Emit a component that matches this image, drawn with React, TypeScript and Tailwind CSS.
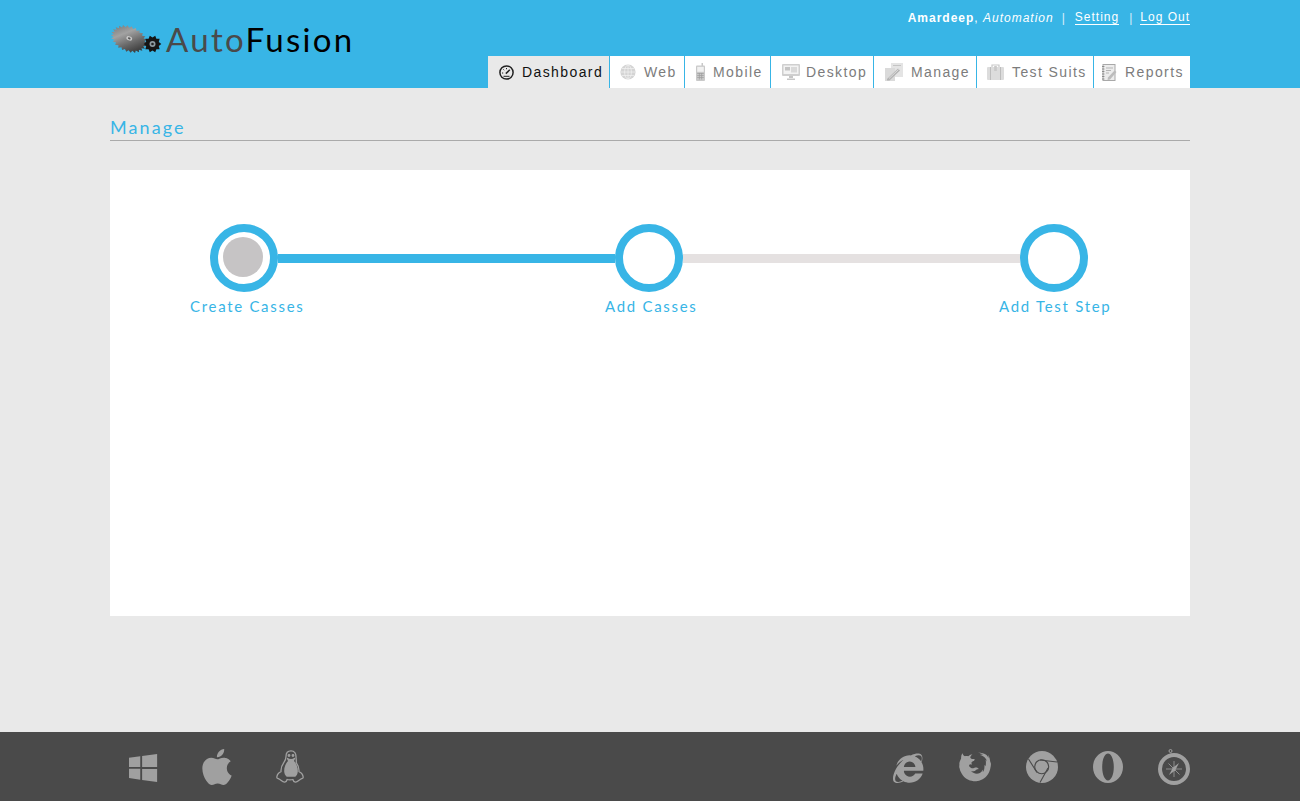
import React from 'react';
import { ImWindows8, ImAppleinc, ImIe, ImFirefox } from 'react-icons/im';

// Saw blade / small gear outlines for the logo
const gearPath = (cx: number, cy: number, r: number, depth: number, teeth: number) => {
    const pts: string[] = [];
    for (let i = 0; i < teeth * 2; i++) {
        const a = (Math.PI * i) / teeth;
        const rad = i % 2 === 0 ? r : r - depth;
        pts.push(`${(cx + Math.cos(a) * rad).toFixed(2)},${(cy + Math.sin(a) * rad).toFixed(2)}`);
    }
    return `M${pts.join('L')}Z`;
};

const LogoGears = () => (
    <svg width="52" height="32" viewBox="0 0 52 32" className="shrink-0">
        <defs>
            <linearGradient id="blade" x1="0" y1="0.1" x2="1" y2="0.8">
                <stop offset="0" stopColor="#6f6f6f" />
                <stop offset="0.35" stopColor="#a2a2a2" />
                <stop offset="0.65" stopColor="#666" />
                <stop offset="1" stopColor="#2b2b2b" />
            </linearGradient>
        </defs>
        <g transform="translate(18 15) rotate(22) scale(1 0.68) translate(-18 -15)">
            <path d={gearPath(18, 15, 19, 3, 26)} fill="url(#blade)" />
            <circle cx="18" cy="14" r="3" fill="#c9c9c9" />
            <circle cx="18" cy="14" r="1.4" fill="#555" />
        </g>
        <path d={gearPath(41.5, 20, 8.8, 2.2, 10)} fill="#151515" />
        <circle cx="41.5" cy="20" r="3" fill="#8d9aa0" />
        <circle cx="41.5" cy="20" r="1.300" fill="#222" />
    </svg>
);

const GaugeIcon = () => (
    <svg width="15" height="15" viewBox="0 0 15 15" fill="none">
        <circle cx="7.5" cy="7.5" r="6.6" stroke="#222" strokeWidth="1.5" />
        <path d="M6.800 8.600 10.800 4.800" stroke="#222" strokeWidth="1.5" />
        <path d="M3 8h1.200M4.400 4.400l.8.8M7.500 3v1.200M4.500 11.300h6" stroke="#222" strokeWidth="1" />
    </svg>
);

const GlobeIcon = () => (
    <svg width="16" height="16" viewBox="0 0 16 16" fill="none">
        <circle cx="8" cy="8" r="7.6" fill="#d4d4d4" />
        <g stroke="#f2f2f2" strokeWidth="0.7">
            <ellipse cx="8" cy="8" rx="3.4" ry="7" />
            <path d="M8 1v14M1 8h14M2 4.500h12M2 11.500h12" />
        </g>
    </svg>
);

const PhoneIcon = () => (
    <svg width="9" height="18" viewBox="0 0 9 18" fill="none">
        <rect x="5.600" y="0" width="1.200" height="3" fill="#bbb" />
        <rect x="0" y="2.500" width="9" height="15.500" rx="1" fill="#c9c9c9" />
        <rect x="1.200" y="3.800" width="6.600" height="5" fill="#f1f1f1" />
        <path d="M1.200 10.500h6.600M1.200 12.500h6.600M1.200 14.500h6.600M3.400 10v6.500M5.600 10v6.500" stroke="#9e9e9e" strokeWidth="0.7" />
    </svg>
);

const DesktopIcon = () => (
    <svg width="18" height="16" viewBox="0 0 18 16" fill="none">
        <rect x="0" y="0" width="18" height="12" rx="1" fill="#cfcfcf" />
        <rect x="1.500" y="1.500" width="15" height="8.500" fill="#f3f3f3" />
        <rect x="3" y="3" width="5" height="3.500" fill="#c4c4c4" />
        <rect x="9" y="3" width="6" height="5.500" fill="#d9d9d9" />
        <path d="M7 12h4v2H7zM5 14.500h8V16H5z" fill="#c6c6c6" />
    </svg>
);

const ManageIcon = () => (
    <svg width="18" height="18" viewBox="0 0 18 18" fill="none">
        <rect x="6" y="0" width="12" height="14" fill="#e4e4e4" />
        <path d="M8 2.500h8" stroke="#c4c4c4" />
        <rect x="0" y="5" width="10" height="13" fill="#dadada" />
        <path d="M2 16 13 5.500l2 2L4.500 17.500H2z" fill="#b4b4b4" />
        <path d="M4 15.500 13.500 6.500" stroke="#eeeeee" strokeWidth="0.7" />
    </svg>
);

const BriefcaseIcon = () => (
    <svg width="17" height="16" viewBox="0 0 17 16" fill="none">
        <path d="M5 3V1h7v2" stroke="#c8c8c8" strokeWidth="1.200" />
        <rect x="0" y="3" width="17" height="13" rx="1" fill="#dcdcdc" />
        <path d="M3.500 3v13M13.500 3v13" stroke="#bdbdbd" strokeWidth="1" />
        <rect x="7.200" y="2" width="2.600" height="5" fill="#c9c9c9" />
    </svg>
);

const ReportIcon = () => (
    <svg width="15" height="17" viewBox="0 0 15 17" fill="none">
        <rect x="1" y="0.500" width="12" height="16" fill="#ececec" stroke="#a8a8a8" />
        <path d="M0 2.500h2.400M0 5h2.400M0 7.500h2.400M0 10h2.400M0 12.500h2.400M0 15h2.400" stroke="#8c8c8c" />
        <path d="M4 4h7M4 6.500h5M4 9h3" stroke="#b5b5b5" />
        <path d="M6 13.500 12.500 6.500l2 1.600L8 15.500l-2.500.5z" fill="#bcbcbc" />
    </svg>
);

const TuxIcon = () => (
    <svg width="30" height="34" viewBox="0 0 30 34" fill="none" stroke="#a0a0a0" strokeWidth="1.300" strokeLinejoin="round">
        <path d="M15 .8c-3.600 0-5 2.700-5 5.700 0 2.900-.6 4-2.200 6.200-2 2.700-3.100 5.500-2.800 9-1.900.7-3.800 3-4.200 5.300-.2 1.300 1.200 1.400 2.300 2 1.800 1 3.700 3.400 5.600 3.100 1.700-.3 2.200-1.600 2.400-2.600 1.300.4 4.400.4 5.800 0 .2 1 .8 2.300 2.400 2.600 1.900.3 3.800-2.100 5.600-3.100 1.100-.6 2.500-.7 2.300-2-.4-2.300-2.300-4.600-4.200-5.300.3-3.500-.8-6.300-2.800-9C20.600 10.500 20 9.400 20 6.500c0-3-1.400-5.700-5-5.700z" />
        <path d="M12.500 10.500c-2.500 2.500-4.600 6.600-4.300 11 .2 2.300 1.200 4.300 2.500 5.300h8.600c1.300-1 2.300-3 2.500-5.300.3-4.400-1.800-8.500-4.300-11" fill="#a0a0a0" stroke="none" />
        <path d="M11.500 8.500c1.200 1.500 5.800 1.500 7 0l-1.500 3h-4z" fill="#a0a0a0" />
        <circle cx="13" cy="5.500" r=".8" fill="#a0a0a0" />
        <circle cx="17" cy="5.500" r=".8" fill="#a0a0a0" />
    </svg>
);

const ChromeIcon = () => (
    <svg width="32" height="32" viewBox="0 0 32 32" fill="none">
        <circle cx="16" cy="16" r="16" fill="#a0a0a0" />
        <g stroke="#4a4a4a" strokeWidth="1.100">
            <circle cx="15.700" cy="15.700" r="7" />
            <path d="M2.500 8 11 21.500M14 9l17 2M22 17l-8 14.500" />
        </g>
    </svg>
);

const OperaIcon = () => (
    <svg width="30" height="32" viewBox="0 0 30 32">
        <path fillRule="evenodd" fill="#a0a0a0" d="M15 0C6.700 0 0 7.200 0 16s6.700 16 15 16 15-7.200 15-16S23.300 0 15 0zm0 2.600c3.400 0 5.800 6 5.800 13.400S18.400 29.400 15 29.400 9.200 23.400 9.200 16 11.600 2.600 15 2.600z" />
    </svg>
);

const SafariIcon = () => (
    <svg width="32" height="36" viewBox="0 0 32 36" fill="none">
        <circle cx="12.500" cy="2" r="1.500" stroke="#a0a0a0" strokeWidth="1" />
        <circle cx="16" cy="20" r="14" stroke="#a0a0a0" strokeWidth="4" />
        <path d="M21 14 17.300 21.300 11 26l3.800-7.200z" fill="#a0a0a0" />
        <path d="M16 12v16M8 20h16M10.500 14.500l11 11" stroke="#a0a0a0" strokeWidth="0.800" />
    </svg>
);

const tabs = [
    { label: 'Dashboard', icon: <GaugeIcon />, width: 'w-[122px] bg-[#e9e9e9] text-[#111]', pad: 'pl-[11px] gap-[8px]' },
    { label: 'Web', icon: <GlobeIcon />, width: 'w-[75px] bg-white text-[#7c7c7c]', pad: 'pl-[10px] gap-[8px]' },
    { label: 'Mobile', icon: <PhoneIcon />, width: 'w-[86px] bg-white text-[#7c7c7c]', pad: 'pl-[11px] gap-[8px]' },
    { label: 'Desktop', icon: <DesktopIcon />, width: 'w-[103px] bg-white text-[#7c7c7c]', pad: 'pl-[11px] gap-[6px]' },
    { label: 'Manage', icon: <ManageIcon />, width: 'w-[103px] bg-white text-[#7c7c7c]', pad: 'pl-[11px] gap-[8px]' },
    { label: 'Test Suits', icon: <BriefcaseIcon />, width: 'w-[117px] bg-white text-[#7c7c7c]', pad: 'pl-[10px] gap-[8px]' },
    { label: 'Reports', icon: <ReportIcon />, width: 'w-[96px] bg-white text-[#7c7c7c] border-r-0', pad: 'pl-[8px] gap-[8px]' },
];

const Ring = ({ active }: { active?: boolean }) => (
    <div className="w-[68px] h-[68px] shrink-0 rounded-full border-[8px] border-[#38b5e6] bg-white flex items-center justify-center">
        {active && <div className="w-[40px] h-[40px] rounded-full bg-[#c6c4c5] -translate-x-px -translate-y-px" />}
    </div>
);

export default function App() {
    return (
        <div className="min-h-[801px] h-screen flex flex-col bg-[#e9e9e9] font-['Liberation_Sans',Arial,sans-serif]">
            {/* Header */}
            <header className="h-[88px] shrink-0 bg-[#38b5e6]">
                <div className="w-[1080px] h-full mx-auto flex justify-between">
                    <div className="flex items-start pt-[24px] pl-px">
                        <LogoGears />
                        <span className="ml-[3px] -mt-[7px] text-[33px] leading-[44px] tracking-[2.300px] font-normal font-['Lato',sans-serif]">
                            <span className="text-[#4a4a4a]">Auto</span>
                            <span className="text-black">Fusion</span>
                        </span>
                    </div>
                    <div className="flex flex-col items-end justify-between">
                        <div className="flex items-center pt-[10px] text-[12px] leading-[14px] tracking-[1px] text-white">
                            <span className="font-bold">Amardeep</span>
                            <span>,&nbsp;</span>
                            <span className="italic">Automation</span>
                            <span className="ml-[8px] mr-[9px] opacity-80">|</span>
                            <a className="border-b border-white">Setting</a>
                            <span className="ml-[10px] mr-[7px] opacity-80">|</span>
                            <a className="border-b border-white">Log Out</a>
                        </div>
                        <nav className="flex h-[32px]">
                            {tabs.map((tab) => (
                                <div
                                    key={tab.label}
                                    className={`${tab.width} ${tab.pad} h-full flex items-center border-r border-[#38b5e6] text-[14px] tracking-[1.400px] whitespace-nowrap`}
                                >
                                    {tab.icon}
                                    <span>{tab.label}</span>
                                </div>
                            ))}
                        </nav>
                    </div>
                </div>
            </header>

            {/* Main */}
            <main className="flex-1 w-[1080px] mx-auto font-['Lato',sans-serif]">
                <h1 className="mt-[28px] h-[25px] border-b border-[#aaaaaa] text-[18px] leading-[22px] tracking-[2.100px] text-[#38b5e6]">Manage</h1>
                <section className="mt-[29px] h-[446px] bg-white pt-[54px]">
                    <div className="flex items-center pl-[100px] pr-[102px]">
                        <Ring active />
                        <div className="flex-1 h-[9px] bg-[#38b5e6]" />
                        <Ring />
                        <div className="flex-1 h-[9px] bg-[#e5e1e1]" />
                        <Ring />
                    </div>
                    <div className="flex mt-[4px] pl-[80px] text-[15px] leading-[20px] tracking-[1.700px] text-[#38b5e6] whitespace-nowrap">
                        <span className="w-[114px]">Create Casses</span>
                        <span className="ml-[301px] w-[90px]">Add Casses</span>
                        <span className="ml-[304px]">Add Test Step</span>
                    </div>
                </section>
            </main>

            {/* Footer */}
            <footer className="h-[69px] shrink-0 bg-[#4a4a4a]">
                <div className="w-[1080px] h-full mx-auto flex items-center justify-between text-[#a0a0a0]">
                    <div className="flex items-center pl-[19px]">
                        <ImWindows8 size={30} />
                        <ImAppleinc size={36} className="ml-[40px]" />
                        <div className="ml-[41px]"><TuxIcon /></div>
                    </div>
                    <div className="flex items-center gap-[35px]">
                        <ImIe size={32} className="-mr-px" />
                        <ImFirefox size={32} />
                        <ChromeIcon />
                        <OperaIcon />
                        <SafariIcon />
                    </div>
                </div>
            </footer>
        </div>
    );
}
